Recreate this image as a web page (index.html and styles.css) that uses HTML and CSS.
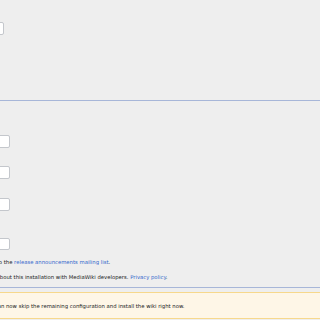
FILE: index.html
```html
<!DOCTYPE html>
<html lang="en">
<head>
  <meta charset="UTF-8" />
  <title>MediaWiki installation - Options</title>
  <link rel="stylesheet" href="styles.css">
</head>
<body>
  <div class="config-page">
    <div class="config-field first-field">
      <input class="config-input wide" type="text">
    </div>

    <div class="section-rule"></div>

    <div class="config-field">
      <input class="config-input" type="text">
    </div>
    <div class="config-field gap-19">
      <input class="config-input" type="text">
    </div>
    <div class="config-field gap-27">
      <input class="config-input" type="text">
    </div>
    <div class="config-field last-field">
      <input class="config-input short" type="text">
    </div>

    <p class="config-check subscribe">Subscribe to the <a href="#">release announcements mailing list</a>.</p>
    <p class="config-check share">Share data about this installation with MediaWiki developers. <a href="#">Privacy policy</a>.</p>

    <div class="section-rule bottom-rule"></div>

    <div class="warning-box">
      <span class="warning-text">You can now skip the remaining configuration and install the wiki right now.</span>
    </div>
  </div>
</body>
</html>
```

FILE: styles.css
```css
:root {
  --bg: #eeeeee;
  --text: #202122;
  --link: #3366cc;
  --rule: #a7b6d8;
  --input-border: #c4c7cc;
  --warn-bg: #fef6e7;
  --warn-border: #f7d88c;
}

body {
  margin: 0;
  background: var(--bg);
  color: var(--text);
  font-family: "DejaVu Sans", Verdana, sans-serif;
  font-size: 5.3px;
  overflow: hidden;
  height: 320px;
}

.config-page {
  padding-top: 22px;
}

.config-field {
  height: 13px;
  margin-bottom: 18px;
  display: flex;
}

.config-field.gap-19 {
  margin-bottom: 19px;
}

.config-field.gap-27 {
  margin-bottom: 27px;
}

.first-field {
  margin-bottom: 65px;
}

.last-field {
  height: 12px;
  margin-bottom: 5px;
}

.config-input {
  box-sizing: border-box;
  width: 100px;
  height: 13px;
  margin: 0 0 0 -90px;
  padding: 0;
  background: #fff;
  border: 1px solid var(--input-border);
  border-radius: 2px;
}

.config-input.wide {
  margin-left: -96px;
}

.config-input.short {
  height: 12px;
}

.section-rule {
  height: 0;
  border-top: 1px solid var(--rule);
  margin-bottom: 34px;
}

.config-check {
  margin: 0;
  line-height: 15px;
  white-space: nowrap;
}

.config-check.subscribe {
  margin-left: -31px;
}

.config-check.share {
  margin-left: -34px;
}

a {
  color: var(--link);
  text-decoration: none;
}

.bottom-rule {
  margin-top: 2px;
  margin-bottom: 4px;
}

.warning-box {
  box-sizing: border-box;
  height: 27px;
  margin: 0 -10px;
  background: var(--warn-bg);
  border-top: 1px solid var(--warn-border);
  border-bottom: 1px solid var(--warn-border);
  display: flex;
  align-items: center;
  white-space: nowrap;
}

.warning-text {
  margin-left: -6px;
}
```
